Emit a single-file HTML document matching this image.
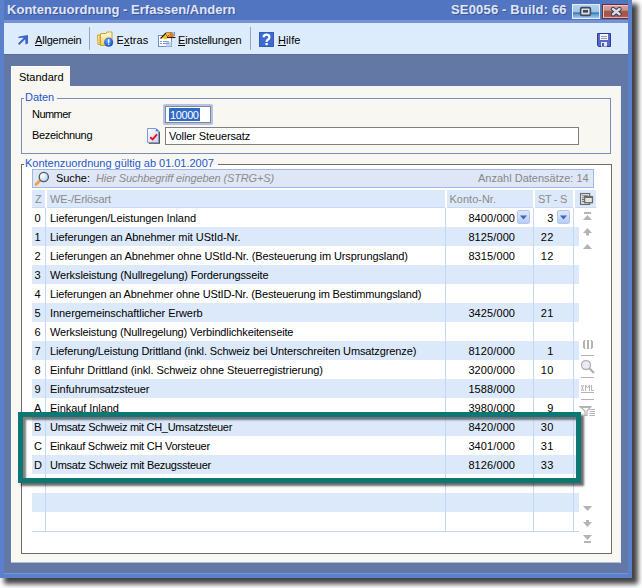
<!DOCTYPE html>
<html><head><meta charset="utf-8"><title>Kontenzuordnung</title><style>
html,body{margin:0;padding:0;width:642px;height:588px;overflow:hidden;background:#ffffff;font-family:"Liberation Sans", sans-serif;}
.t{position:absolute;line-height:20px;white-space:nowrap;}
.r{position:absolute;box-sizing:border-box;}
svg{overflow:visible;}
u{text-decoration:underline;text-underline-offset:1px;}
</style></head><body>
<div class="r" style="left:0px;top:0px;width:632px;height:578px;box-shadow:5px 5px 5px 1px rgba(0,0,0,0.74);"></div>
<div class="r" style="left:0px;top:0px;width:632px;height:578px;background:#5b81cc;"></div>
<div class="r" style="left:4px;top:0px;width:624px;height:20px;background:#5275c2;"></div>
<div class="r" style="left:4px;top:20px;width:624px;height:3px;background:#7594d6;"></div>
<div class="r" style="left:4px;top:23px;width:624px;height:31px;background:#ddecfc;"></div>
<div class="r" style="left:4px;top:54px;width:624px;height:519px;background:#6478a6;"></div>
<div class="r" style="left:4px;top:573px;width:624px;height:1px;background:#7396d8;"></div>
<div class="r" style="left:4px;top:54px;width:624px;height:1px;background:#5a6a98;"></div>
<div class="t" style="left:7px;top:0px;font-size:13px;color:#e0e7f6;font-weight:bold;font-style:normal;letter-spacing:0.03px;text-shadow:1px 1px 0 rgba(40,60,120,0.6);">Kontenzuordnung - Erfassen/Andern</div>
<div class="t" style="left:451px;top:0px;font-size:13px;color:#e0e7f6;font-weight:bold;font-style:normal;letter-spacing:0.17px;text-shadow:1px 1px 0 rgba(40,60,120,0.6);">SE0056 - Build: 66</div>
<div class="r" style="left:572px;top:4px;width:28px;height:15px;background:linear-gradient(#b4d0ec 0%,#a4c4e6 50%,#2f77b4 62%,#5e9ccc 72%,#a8c8e8 100%);border:1px solid #e4eef8;"></div>
<svg style="position:absolute;left:579px;top:6px" width="13" height="11" viewBox="0 0 13 11"><rect x="1.6" y="1.6" width="9.8" height="7.8" rx="1.5" fill="#d8dde4" stroke="#404a5c" stroke-width="1.6"/><rect x="4" y="4" width="5" height="2.6" fill="#404a5c"/></svg>
<div class="r" style="left:602px;top:4px;width:26px;height:15px;background:linear-gradient(#d4a4a4 0%,#c49494 40%,#a85448 48%,#a8564c 85%,#c07c74 100%);border:1px solid #6e2c2c;border-right:none;box-shadow:inset 1px 1px 0 #eac8c8, inset 0 -1px 0 #e0b0a8;"></div>
<svg style="position:absolute;left:609px;top:6px" width="15" height="11" viewBox="0 0 15 11"><path d="M4 3 L10.5 8.2 M10.5 3 L4 8.2" stroke="#3c3c52" stroke-width="4.4" stroke-linecap="round"/><path d="M4 3 L10.5 8.2 M10.5 3 L4 8.2" stroke="#dcdce4" stroke-width="2.4" stroke-linecap="round"/></svg>
<svg style="position:absolute;left:17px;top:34px" width="12" height="12" viewBox="0 0 12 12"><path d="M2 2.5 L11 1 L11 9.5 L8.5 10.5 L8.2 5.2 L2.2 11 L1 9.6 L6.8 3.8 L1 4 Z" fill="#3d64c8"/></svg>
<div class="t" style="left:35px;top:30px;font-size:11px;color:#000;font-weight:normal;font-style:normal;letter-spacing:-0.2px;"><u>A</u>llgemein</div>
<div class="r" style="left:89px;top:27px;width:1px;height:23px;background:#9aa6b8;"></div>
<svg style="position:absolute;left:96px;top:30px" width="18" height="17" viewBox="0 0 18 17"><defs><linearGradient id="fg" x1="0" y1="0" x2="0" y2="1"><stop offset="0" stop-color="#fffce4"/><stop offset="1" stop-color="#f4d040"/></linearGradient>
<radialGradient id="bc" cx="0.4" cy="0.35" r="0.7"><stop offset="0" stop-color="#6aa8ff"/><stop offset="1" stop-color="#0a4ac8"/></radialGradient></defs>
<path d="M1.5 5 H4 V14.5 H2 Z" fill="#f8e8a0" stroke="#d0a030" stroke-width="1"/>
<path d="M4.5 3.5 H10 L11 2 H16 V15.5 H4.5 Z" fill="url(#fg)" stroke="#d0a030" stroke-width="1"/>
<circle cx="12.6" cy="12.2" r="4.6" fill="url(#bc)"/><rect x="12" y="9.2" width="1.4" height="3.6" fill="#fff"/><rect x="12" y="13.6" width="1.4" height="1.2" fill="#fff"/></svg>
<div class="t" style="left:116.6px;top:30px;font-size:11px;color:#000;font-weight:normal;font-style:normal;letter-spacing:0.1px;">E<u>x</u>tras</div>
<svg style="position:absolute;left:157px;top:31px" width="19" height="17" viewBox="0 0 19 17"><rect x="1.5" y="4.5" width="13" height="11" fill="#ffffff" stroke="#7090cc" stroke-width="1"/>
<rect x="9" y="11" width="5.5" height="4.5" fill="#c0d8f4"/>
<rect x="3" y="10" width="2" height="1" fill="#7a9ad0"/><rect x="6" y="10" width="6" height="1" fill="#7a9ad0"/>
<rect x="3" y="12" width="2" height="1" fill="#7a9ad0"/><rect x="6" y="12" width="6" height="1" fill="#7a9ad0"/>
<path d="M3.5 7 L9 1.8 L15.5 1.8 L17 5.5 L11 6.5 L9.5 8.2 Z" fill="#f4c020"/><path d="M12.5 2 L15.5 1.8 L17 5.5 L12.5 6.2 Z" fill="#f07a10"/>
<path d="M9 1.5 H15.5" stroke="#8c8c8c" stroke-width="1"/>
<path d="M3.5 7.5 L9 2" stroke="#202020" stroke-width="1.1"/><path d="M10 6.5 H18.5" stroke="#202020" stroke-width="1.1"/>
<rect x="9" y="4" width="1" height="1" fill="#d04040"/><rect x="10" y="5" width="1" height="1" fill="#d04040"/><rect x="11" y="4" width="1" height="1" fill="#d04040"/>
<rect x="16.5" y="1" width="1.5" height="4" fill="#7a94dc"/></svg>
<div class="t" style="left:178px;top:30px;font-size:11px;color:#000;font-weight:normal;font-style:normal;letter-spacing:-0.2px;"><u>E</u>instellungen</div>
<div class="r" style="left:250px;top:27px;width:1px;height:23px;background:#9aa6b8;"></div>
<svg style="position:absolute;left:258px;top:31px" width="17" height="17" viewBox="0 0 17 17"><rect x="1" y="1" width="15" height="15" rx="1" fill="#3c6ad0"/><rect x="1.5" y="1.5" width="14" height="14" fill="none" stroke="#2c56b8" stroke-width="0.8"/><path d="M5.6 6.3 Q5.6 3.6 8.6 3.6 Q11.4 3.6 11.4 6.2 Q11.4 7.9 9.8 8.8 Q8.6 9.5 8.6 11" fill="none" stroke="#fff" stroke-width="2.2"/><rect x="7.4" y="12" width="2.4" height="2.2" fill="#fff"/></svg>
<div class="t" style="left:278px;top:30px;font-size:11px;color:#000;font-weight:normal;font-style:normal;letter-spacing:0.1px;"><u>H</u>ilfe</div>
<svg style="position:absolute;left:597px;top:33px" width="14" height="14" viewBox="0 0 14 14"><path d="M0.5 0.5 H13.5 V13.5 H1.5 L0.5 12.5 Z" fill="#5868c8" stroke="#2c3a9c" stroke-width="1"/>
<rect x="3" y="1" width="8" height="6" fill="#f4f4f4"/><rect x="4" y="3" width="6" height="1" fill="#9898b8"/><rect x="4" y="5" width="6" height="1" fill="#9898b8"/>
<rect x="4" y="9" width="6" height="4.5" fill="#e8e8f0"/><rect x="5" y="10" width="2" height="3" fill="#4a5ac0"/></svg>
<div class="r" style="left:11px;top:86px;width:609px;height:476px;background:#f8f7f2;border-left:1px solid #fcfcfc;"></div>
<div class="r" style="left:11px;top:562px;width:609px;height:1px;background:#b0bcd4;"></div>
<div class="r" style="left:620px;top:86px;width:1px;height:477px;background:#e8f0fa;"></div>
<div class="r" style="left:11px;top:66px;width:59px;height:21px;background:#f8f7f2;border-left:1px solid #fff;border-top:1px solid #fff;"></div>
<div class="t" style="left:19px;top:67px;font-size:11px;color:#000;font-weight:normal;font-style:normal;letter-spacing:-0.01px;">Standard</div>
<div class="r" style="left:21px;top:98px;width:590px;height:56px;border:1px solid #7a8cb8;"></div>
<div class="r" style="left:24px;top:92px;width:33px;height:12px;background:#f8f7f2;"></div>
<div class="t" style="left:25px;top:87px;font-size:11px;color:#2458cc;font-weight:normal;font-style:normal;letter-spacing:-0.05px;">Daten</div>
<div class="t" style="left:32px;top:104px;font-size:11px;color:#000;font-weight:normal;font-style:normal;letter-spacing:-0.55px;">Nummer</div>
<div class="t" style="left:32px;top:125px;font-size:11px;color:#000;font-weight:normal;font-style:normal;letter-spacing:-0.31px;">Bezeichnung</div>
<div class="r" style="left:163px;top:104px;width:50px;height:21px;border:2px solid #b4c0e8;border-radius:2px;background:#fff;"></div>
<div class="r" style="left:165px;top:106px;width:46px;height:17px;border:1px solid #7f8a8a;background:#fff;"></div>
<div class="r" style="left:169px;top:108px;width:31px;height:13px;background:#316ac5;"></div>
<div class="t" style="left:170px;top:105px;font-size:11px;color:#fff;font-weight:normal;font-style:normal;letter-spacing:-0.4px;">10000</div>
<svg style="position:absolute;left:146px;top:127px" width="16" height="18" viewBox="0 0 16 18"><defs><linearGradient id="dg" x1="0" y1="0" x2="1" y2="1"><stop offset="0" stop-color="#ffffff"/><stop offset="1" stop-color="#c8d0f4"/></linearGradient></defs>
<path d="M2 16 H13.2 V4.5 L10.5 1.5 H2 Z" fill="#404040" transform="translate(0.8,0.8)"/>
<path d="M1.5 15.5 H12.7 V4.3 L9.9 1.5 H1.5 Z" fill="url(#dg)" stroke="#7c98d8" stroke-width="1"/>
<path d="M9.9 1.5 V4.3 H12.7" fill="#3c7ae0"/>
<path d="M4.2 10.3 L6.6 12.4 L11 7.3" fill="none" stroke="#f01010" stroke-width="1.8"/></svg>
<div class="r" style="left:165px;top:127px;width:414px;height:18px;border:1px solid #7f7f7f;background:#fff;"></div>
<div class="t" style="left:169px;top:126px;font-size:11px;color:#000;font-weight:normal;font-style:normal;letter-spacing:-0.12px;">Voller Steuersatz</div>
<div class="r" style="left:21px;top:164px;width:591px;height:390px;border:1px solid #6c6c6c;background:#fff;"></div>
<div class="r" style="left:24px;top:157px;width:194px;height:9px;background:#f8f7f2;"></div>
<div class="r" style="left:24px;top:165px;width:194px;height:1px;background:#fff;"></div>
<div class="t" style="left:25px;top:153px;font-size:11px;color:#2458cc;font-weight:normal;font-style:normal;letter-spacing:-0.02px;">Kontenzuordnung gültig ab 01.01.2007</div>
<div class="r" style="left:32px;top:169px;width:562px;height:19px;border:1px solid #9cb8e6;background:#dfe6f6;"></div>
<svg style="position:absolute;left:34px;top:171px" width="17" height="15" viewBox="0 0 17 15"><defs><radialGradient id="mg" cx="0.35" cy="0.35" r="0.7"><stop offset="0" stop-color="#ffffff"/><stop offset="1" stop-color="#a8d8f0"/></radialGradient></defs>
<path d="M2 13.5 L6.5 9" stroke="#f0a040" stroke-width="2.6" stroke-linecap="round"/>
<circle cx="9.8" cy="6" r="4.6" fill="url(#mg)" stroke="#505860" stroke-width="1.3"/></svg>
<div class="t" style="left:56px;top:168px;font-size:11px;color:#000;font-weight:normal;font-style:normal;letter-spacing:-0.05px;">Suche:</div>
<div class="t" style="left:96px;top:168px;font-size:11px;color:#8c8c8c;font-weight:normal;font-style:italic;letter-spacing:-0.11px;">Hier Suchbegriff eingeben (STRG+S)</div>
<div class="t" style="left:478px;top:168px;font-size:11px;color:#888888;font-weight:normal;font-style:normal;letter-spacing:0px;">Anzahl Datensätze: 14</div>
<div class="r" style="left:32px;top:190px;width:13px;height:18px;background:#dce9fb;border-bottom:1px solid #c8daf4;"></div>
<div class="r" style="left:47px;top:190px;width:398px;height:18px;background:#dce9fb;border-bottom:1px solid #c8daf4;"></div>
<div class="r" style="left:447px;top:190px;width:86px;height:18px;background:#dce9fb;border-bottom:1px solid #c8daf4;"></div>
<div class="r" style="left:535px;top:190px;width:38px;height:18px;background:#dce9fb;border-bottom:1px solid #c8daf4;"></div>
<div class="r" style="left:575px;top:190px;width:21px;height:18px;background:#dce9fb;border-bottom:1px solid #c8daf4;"></div>
<div class="t" style="left:35px;top:189px;font-size:11px;color:#8a8a8a;font-weight:normal;font-style:normal;letter-spacing:0px;">Z</div>
<div class="t" style="left:50px;top:189px;font-size:11px;color:#8a8a8a;font-weight:normal;font-style:normal;letter-spacing:-0.11px;">WE-/Erlösart</div>
<div class="t" style="left:449.5px;top:189px;font-size:11px;color:#8a8a8a;font-weight:normal;font-style:normal;letter-spacing:0.0px;">Konto-Nr.</div>
<div class="t" style="left:538px;top:189px;font-size:11px;color:#8a8a8a;font-weight:normal;font-style:normal;letter-spacing:-0.35px;">ST - S</div>
<svg style="position:absolute;left:577px;top:190px" width="20" height="18" viewBox="0 0 20 18"><rect x="3.6" y="3.6" width="9.0" height="10.8" fill="#fff" stroke="#6c6c6c" stroke-width="1.3"/>
<path d="M5 5.8 H11 M5 7.7 H7.5 M5 9.6 H7.5 M5 11.6 H7.5" stroke="#6c6c6c" stroke-width="1.1"/>
<rect x="7.6" y="6.6" width="7.9" height="6.1" fill="#e6e6e0" stroke="#6c6c6c" stroke-width="1.3"/><rect x="7.6" y="6.2" width="7.9" height="1.8" fill="#6c6c6c"/></svg>
<div class="r" style="left:32px;top:227px;width:547px;height:19px;background:#dce9fb;"></div>
<div class="r" style="left:32px;top:265px;width:547px;height:19px;background:#dce9fb;"></div>
<div class="r" style="left:32px;top:303px;width:547px;height:19px;background:#dce9fb;"></div>
<div class="r" style="left:32px;top:341px;width:547px;height:19px;background:#dce9fb;"></div>
<div class="r" style="left:32px;top:379px;width:547px;height:19px;background:#dce9fb;"></div>
<div class="r" style="left:32px;top:417px;width:547px;height:19px;background:#dce9fb;"></div>
<div class="r" style="left:32px;top:455px;width:547px;height:19px;background:#dce9fb;"></div>
<div class="r" style="left:32px;top:493px;width:547px;height:19px;background:#dce9fb;"></div>
<div class="r" style="left:45px;top:208px;width:1px;height:323px;background:#c4d8f6;"></div>
<div class="r" style="left:445px;top:208px;width:1px;height:323px;background:#c4d8f6;"></div>
<div class="r" style="left:533px;top:208px;width:1px;height:323px;background:#c4d8f6;"></div>
<div class="r" style="left:573px;top:208px;width:1px;height:323px;background:#c4d8f6;"></div>
<div class="r" style="left:32px;top:531px;width:547px;height:1px;background:#c4d8f6;"></div>
<div class="t" style="left:34px;top:208px;font-size:11px;color:#000;font-weight:normal;font-style:normal;letter-spacing:0px;width:7px;text-align:center;">0</div>
<div class="t" style="left:50px;top:208px;font-size:11px;color:#000;font-weight:normal;font-style:normal;letter-spacing:-0.069px;">Lieferungen/Leistungen Inland</div>
<div class="t" style="left:440px;top:208px;font-size:11px;color:#000;font-weight:normal;font-style:normal;letter-spacing:0.1px;width:75.1px;text-align:right;">8400/000</div>
<div class="t" style="left:500px;top:208px;font-size:11px;color:#000;font-weight:normal;font-style:normal;letter-spacing:0.45px;width:53.9px;text-align:right;">3</div>
<div class="t" style="left:34px;top:227px;font-size:11px;color:#000;font-weight:normal;font-style:normal;letter-spacing:0px;width:7px;text-align:center;">1</div>
<div class="t" style="left:50px;top:227px;font-size:11px;color:#000;font-weight:normal;font-style:normal;letter-spacing:-0.057px;">Lieferungen an Abnehmer mit UStId-Nr.</div>
<div class="t" style="left:440px;top:227px;font-size:11px;color:#000;font-weight:normal;font-style:normal;letter-spacing:0.1px;width:75.1px;text-align:right;">8125/000</div>
<div class="t" style="left:500px;top:227px;font-size:11px;color:#000;font-weight:normal;font-style:normal;letter-spacing:0.45px;width:53.9px;text-align:right;">22</div>
<div class="t" style="left:34px;top:246px;font-size:11px;color:#000;font-weight:normal;font-style:normal;letter-spacing:0px;width:7px;text-align:center;">2</div>
<div class="t" style="left:50px;top:246px;font-size:11px;color:#000;font-weight:normal;font-style:normal;letter-spacing:-0.096px;">Lieferungen an Abnehmer ohne UStId-Nr. (Besteuerung im Ursprungsland)</div>
<div class="t" style="left:440px;top:246px;font-size:11px;color:#000;font-weight:normal;font-style:normal;letter-spacing:0.1px;width:75.1px;text-align:right;">8315/000</div>
<div class="t" style="left:500px;top:246px;font-size:11px;color:#000;font-weight:normal;font-style:normal;letter-spacing:0.45px;width:53.9px;text-align:right;">12</div>
<div class="t" style="left:34px;top:265px;font-size:11px;color:#000;font-weight:normal;font-style:normal;letter-spacing:0px;width:7px;text-align:center;">3</div>
<div class="t" style="left:50px;top:265px;font-size:11px;color:#000;font-weight:normal;font-style:normal;letter-spacing:-0.117px;">Werksleistung (Nullregelung) Forderungsseite</div>
<div class="t" style="left:34px;top:284px;font-size:11px;color:#000;font-weight:normal;font-style:normal;letter-spacing:0px;width:7px;text-align:center;">4</div>
<div class="t" style="left:50px;top:284px;font-size:11px;color:#000;font-weight:normal;font-style:normal;letter-spacing:-0.154px;">Lieferungen an Abnehmer ohne UStID-Nr. (Besteuerung im Bestimmungsland)</div>
<div class="t" style="left:34px;top:303px;font-size:11px;color:#000;font-weight:normal;font-style:normal;letter-spacing:0px;width:7px;text-align:center;">5</div>
<div class="t" style="left:50px;top:303px;font-size:11px;color:#000;font-weight:normal;font-style:normal;letter-spacing:-0.071px;">Innergemeinschaftlicher Erwerb</div>
<div class="t" style="left:440px;top:303px;font-size:11px;color:#000;font-weight:normal;font-style:normal;letter-spacing:0.1px;width:75.1px;text-align:right;">3425/000</div>
<div class="t" style="left:500px;top:303px;font-size:11px;color:#000;font-weight:normal;font-style:normal;letter-spacing:0.45px;width:53.9px;text-align:right;">21</div>
<div class="t" style="left:34px;top:322px;font-size:11px;color:#000;font-weight:normal;font-style:normal;letter-spacing:0px;width:7px;text-align:center;">6</div>
<div class="t" style="left:50px;top:322px;font-size:11px;color:#000;font-weight:normal;font-style:normal;letter-spacing:-0.14px;">Werksleistung (Nullregelung) Verbindlichkeitenseite</div>
<div class="t" style="left:34px;top:341px;font-size:11px;color:#000;font-weight:normal;font-style:normal;letter-spacing:0px;width:7px;text-align:center;">7</div>
<div class="t" style="left:50px;top:341px;font-size:11px;color:#000;font-weight:normal;font-style:normal;letter-spacing:-0.113px;">Lieferung/Leistung Drittland (inkl. Schweiz bei Unterschreiten Umsatzgrenze)</div>
<div class="t" style="left:440px;top:341px;font-size:11px;color:#000;font-weight:normal;font-style:normal;letter-spacing:0.1px;width:75.1px;text-align:right;">8120/000</div>
<div class="t" style="left:500px;top:341px;font-size:11px;color:#000;font-weight:normal;font-style:normal;letter-spacing:0.45px;width:53.9px;text-align:right;">1</div>
<div class="t" style="left:34px;top:360px;font-size:11px;color:#000;font-weight:normal;font-style:normal;letter-spacing:0px;width:7px;text-align:center;">8</div>
<div class="t" style="left:50px;top:360px;font-size:11px;color:#000;font-weight:normal;font-style:normal;letter-spacing:-0.07px;">Einfuhr Drittland (inkl. Schweiz ohne Steuerregistrierung)</div>
<div class="t" style="left:440px;top:360px;font-size:11px;color:#000;font-weight:normal;font-style:normal;letter-spacing:0.1px;width:75.1px;text-align:right;">3200/000</div>
<div class="t" style="left:500px;top:360px;font-size:11px;color:#000;font-weight:normal;font-style:normal;letter-spacing:0.45px;width:53.9px;text-align:right;">10</div>
<div class="t" style="left:34px;top:379px;font-size:11px;color:#000;font-weight:normal;font-style:normal;letter-spacing:0px;width:7px;text-align:center;">9</div>
<div class="t" style="left:50px;top:379px;font-size:11px;color:#000;font-weight:normal;font-style:normal;letter-spacing:-0.084px;">Einfuhrumsatzsteuer</div>
<div class="t" style="left:440px;top:379px;font-size:11px;color:#000;font-weight:normal;font-style:normal;letter-spacing:0.1px;width:75.1px;text-align:right;">1588/000</div>
<div class="t" style="left:34px;top:398px;font-size:11px;color:#000;font-weight:normal;font-style:normal;letter-spacing:0px;width:7px;text-align:center;">A</div>
<div class="t" style="left:50px;top:398px;font-size:11px;color:#000;font-weight:normal;font-style:normal;letter-spacing:-0.063px;">Einkauf Inland</div>
<div class="t" style="left:440px;top:398px;font-size:11px;color:#000;font-weight:normal;font-style:normal;letter-spacing:0.1px;width:75.1px;text-align:right;">3980/000</div>
<div class="t" style="left:500px;top:398px;font-size:11px;color:#000;font-weight:normal;font-style:normal;letter-spacing:0.45px;width:53.9px;text-align:right;">9</div>
<div class="t" style="left:34px;top:417px;font-size:11px;color:#000;font-weight:normal;font-style:normal;letter-spacing:0px;width:7px;text-align:center;">B</div>
<div class="t" style="left:50px;top:417px;font-size:11px;color:#000;font-weight:normal;font-style:normal;letter-spacing:-0.292px;">Umsatz Schweiz mit CH_Umsatzsteuer</div>
<div class="t" style="left:440px;top:417px;font-size:11px;color:#000;font-weight:normal;font-style:normal;letter-spacing:0.1px;width:75.1px;text-align:right;">8420/000</div>
<div class="t" style="left:500px;top:417px;font-size:11px;color:#000;font-weight:normal;font-style:normal;letter-spacing:0.45px;width:53.9px;text-align:right;">30</div>
<div class="t" style="left:34px;top:436px;font-size:11px;color:#000;font-weight:normal;font-style:normal;letter-spacing:0px;width:7px;text-align:center;">C</div>
<div class="t" style="left:50px;top:436px;font-size:11px;color:#000;font-weight:normal;font-style:normal;letter-spacing:-0.237px;">Einkauf Schweiz mit CH Vorsteuer</div>
<div class="t" style="left:440px;top:436px;font-size:11px;color:#000;font-weight:normal;font-style:normal;letter-spacing:0.1px;width:75.1px;text-align:right;">3401/000</div>
<div class="t" style="left:500px;top:436px;font-size:11px;color:#000;font-weight:normal;font-style:normal;letter-spacing:0.45px;width:53.9px;text-align:right;">31</div>
<div class="t" style="left:34px;top:455px;font-size:11px;color:#000;font-weight:normal;font-style:normal;letter-spacing:0px;width:7px;text-align:center;">D</div>
<div class="t" style="left:50px;top:455px;font-size:11px;color:#000;font-weight:normal;font-style:normal;letter-spacing:-0.273px;">Umsatz Schweiz mit Bezugssteuer</div>
<div class="t" style="left:440px;top:455px;font-size:11px;color:#000;font-weight:normal;font-style:normal;letter-spacing:0.1px;width:75.1px;text-align:right;">8126/000</div>
<div class="t" style="left:500px;top:455px;font-size:11px;color:#000;font-weight:normal;font-style:normal;letter-spacing:0.45px;width:53.9px;text-align:right;">33</div>
<div class="r" style="left:517px;top:210px;width:13px;height:14px;background:linear-gradient(#dfe9fc,#b9cef4);border:1px solid #b0c6ee;border-radius:2px;"></div>
<svg style="position:absolute;left:520px;top:215px" width="7" height="5" viewBox="0 0 7 5"><path d="M0 0.5 H7 L3.5 4.5 Z" fill="#3a66c4"/></svg>
<div class="r" style="left:557px;top:210px;width:13px;height:14px;background:linear-gradient(#dfe9fc,#b9cef4);border:1px solid #b0c6ee;border-radius:2px;"></div>
<svg style="position:absolute;left:560px;top:215px" width="7" height="5" viewBox="0 0 7 5"><path d="M0 0.5 H7 L3.5 4.5 Z" fill="#3a66c4"/></svg>
<svg style="position:absolute;left:582px;top:211px" width="11" height="10" viewBox="0 0 11 10"><rect x="2" y="1" width="7" height="2" fill="#b4b4b4"/><path d="M1 9 L5.5 4 L10 9 Z" fill="#b4b4b4"/></svg>
<svg style="position:absolute;left:582px;top:227px" width="11" height="9" viewBox="0 0 11 9"><path d="M1 6 L5.5 1 L10 6 Z" fill="#b4b4b4"/><rect x="4" y="5.5" width="3" height="3" fill="#b4b4b4"/></svg>
<svg style="position:absolute;left:582px;top:243px" width="11" height="7" viewBox="0 0 11 7"><path d="M1 6 L5.5 1 L10 6 Z" fill="#b4b4b4"/></svg>
<svg style="position:absolute;left:581px;top:339px" width="14" height="11" viewBox="0 0 14 11"><path d="M3 1 h1.5 v1 h-1.5 z M2 2 h2 v7 h-2 z M3 9 h1.5 v1 h-1.5 z M6 1 h2 v9 h-2 z M9.5 1 h1.5 v1 h-1.5 z M10 2 h2 v7 h-2 z M9.5 9 h1.5 v1 h-1.5 z" fill="#b4b4b4"/></svg>
<div class="r" style="left:581px;top:355px;width:13px;height:1px;background:#b4b4b4;"></div>
<svg style="position:absolute;left:580px;top:359px" width="16" height="16" viewBox="0 0 16 16"><circle cx="6" cy="6" r="4.5" fill="#eceaf8" stroke="#b4b4b4" stroke-width="1.4"/><path d="M9 9 L14 14" stroke="#b4b4b4" stroke-width="2.4"/></svg>
<div class="r" style="left:581px;top:377px;width:13px;height:1px;background:#b4b4b4;"></div>
<svg style="position:absolute;left:580px;top:384px" width="15" height="10" viewBox="0 0 15 10"><path d="M1.5 1 L3.5 7 M3.5 1 L1.5 7 M5.5 7 V1 L7.5 4 L9.5 1 V7 M11.5 1 V6.5 H14" stroke="#b4b4b4" stroke-width="1" fill="none"/><rect x="1" y="8" width="13" height="1" fill="#b4b4b4"/></svg>
<div class="r" style="left:581px;top:399px;width:13px;height:1px;background:#b4b4b4;"></div>
<svg style="position:absolute;left:579px;top:405px" width="17" height="12" viewBox="0 0 17 12"><path d="M1 1.5 H12 L8 6 V10.5 L6 10.5 V6 Z" fill="none" stroke="#b4b4b4" stroke-width="1.2"/><rect x="1" y="1" width="11" height="2" fill="#b4b4b4"/><path d="M10.5 4.5 H16 M10.5 6.5 H16 M10.5 8.5 H16 M10.5 10.5 H16" stroke="#b4b4b4" stroke-width="1"/></svg>
<svg style="position:absolute;left:582px;top:505px" width="11" height="7" viewBox="0 0 11 7"><path d="M1 1 L5.5 6 L10 1 Z" fill="#b4b4b4"/></svg>
<svg style="position:absolute;left:582px;top:519px" width="11" height="9" viewBox="0 0 11 9"><rect x="4" y="1" width="3" height="3" fill="#b4b4b4"/><path d="M1 3 L5.5 8 L10 3 Z" fill="#b4b4b4"/></svg>
<svg style="position:absolute;left:582px;top:534px" width="11" height="10" viewBox="0 0 11 10"><path d="M1 1 L5.5 6 L10 1 Z" fill="#b4b4b4"/><rect x="2" y="7" width="7" height="2" fill="#b4b4b4"/></svg>
<div class="r" style="left:18px;top:412px;width:563px;height:71px;border:5px solid #0c7773;box-shadow:3px 3px 2px rgba(0,0,0,0.58), inset 3px 3px 2px rgba(0,0,0,0.5);"></div>
</body></html>
